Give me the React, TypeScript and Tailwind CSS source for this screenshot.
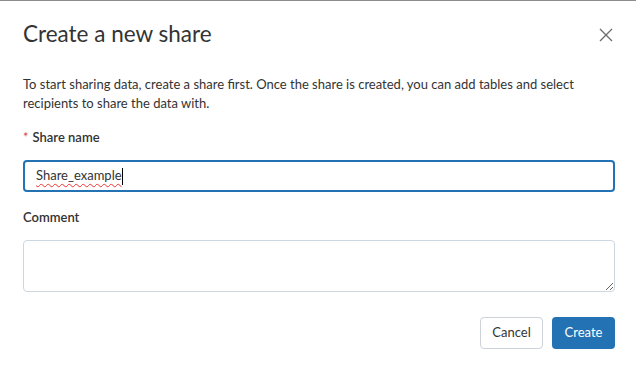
import React from "react";

export default function App() {
  const font = { fontFamily: 'Lato, "Noto Sans", sans-serif' };
  return (
    <div
      className="w-[636px] h-[375px] bg-white border-t border-[#8c8c8c] text-[#1f2933] overflow-hidden"
      style={font}
    >
      <div className="pl-[23px] pr-[21px] pt-[18px]">
        <div className="flex items-center justify-between">
          <h1 className="text-[22.5px] leading-[30px] text-[#333] font-normal">Create a new share</h1>
          <button className="w-[24px] h-[24px] flex items-center justify-center mr-[-3px] mt-[1px]">
            <svg width="14" height="14" viewBox="0 0 14 14" fill="none">
              <path d="M1 1L13 13M13 1L1 13" stroke="#6b6b6b" strokeWidth="1.3" />
            </svg>
          </button>
        </div>
        <p className="mt-[26px] text-[13px] leading-[19px] text-[#333]">
          To start sharing data, create a share first. Once the share is created, you can add tables and select recipients to share the data with.
        </p>
        <div className="mt-[15px] text-[13px] leading-[18px] font-semibold text-[#333]">
          <span className="text-[#d44] font-normal mr-[4px]">*</span>Share name
        </div>
        <div className="mt-[14px] h-[32px] w-[592px] border-2 border-[#2272b4] rounded-[4px] flex items-center px-[11px] text-[13px] text-[#333]">
          <span className="underline decoration-wavy decoration-[#e33] underline-offset-[3px] decoration-1">Share_example</span>
          <span className="w-px h-[17px] bg-black"></span>
        </div>
        <div className="mt-[16px] text-[13px] leading-[18px] font-semibold text-[#333]">Comment</div>
        <textarea
          className="mt-[14px] block w-[592px] h-[52px] border border-[#cdd7e1] rounded-[4px] outline-none text-[13px] px-[11px] py-[6px]"
          style={font}
        />
        <div className="mt-[25px] flex justify-end gap-[9px]">
          <button className="h-[32px] w-[63px] border border-[#cdd3d8] rounded-[4px] text-[13px] text-[#333] bg-white">
            Cancel
          </button>
          <button className="h-[32px] w-[63px] rounded-[4px] text-[13px] text-white bg-[#2272b4]">
            Create
          </button>
        </div>
      </div>
    </div>
  );
}
